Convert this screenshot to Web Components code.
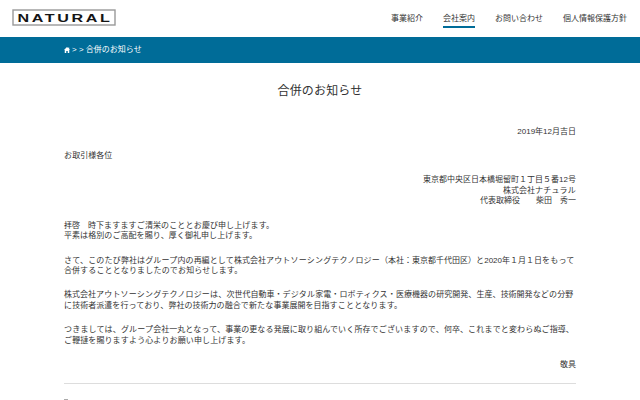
<!DOCTYPE html>
<html lang="ja">
<head>
<meta charset="utf-8">
<title>合併のお知らせ</title>
<style>
body{margin:0;height:400px;overflow:hidden;background:#fff;color:#333;font:8px/10.5px "Liberation Sans","Noto Sans CJK JP",sans-serif}
</style>
</head>
<body>
<notice-page></notice-page>
<script>
const define = (name, html) => customElements.define(name, class extends HTMLElement {
  constructor() {
    super();
    this.attachShadow({mode: 'open'}).innerHTML = html;
  }
});

define('brand-logo', `
<style>:host{display:block;width:104px;height:17px}svg{display:block}</style>
<svg width="104" height="17" viewBox="0 0 104 17">
  <rect x="1" y="1" width="102" height="15" fill="#fff" stroke="#999" stroke-width="1.4"/>
  <text transform="translate(5.4 12.5) scale(1.55 1)" textLength="59.6" lengthAdjust="spacing" font-family="Liberation Sans" font-weight="700" font-size="10.4" fill="#151515">NATURAL</text>
</svg>`);

define('nav-item', `
<style>
:host{display:block;box-sizing:border-box;height:15px;line-height:12px;white-space:nowrap;border-bottom:2px solid transparent}
:host([active]){border-color:#006c98}
</style><slot></slot>`);

define('site-header', `
<style>
:host{display:flex;justify-content:space-between;box-sizing:border-box;height:37px;padding:9px 13px 0 12px}
nav{display:flex;gap:20px;padding-top:4px}
</style>
<brand-logo></brand-logo>
<nav><slot></slot></nav>`);

define('bread-crumb', `
<style>
:host{display:flex;align-items:center;box-sizing:border-box;height:25.5px;padding:0 64px;background:#006c98;color:#fff;white-space:pre}
svg{display:block;margin-right:2px}
</style>
<svg width="6" height="6" viewBox="0 0 12 12"><path fill="#fff" d="M6 0 0 5.8h1.5V12h3V8h3v4h3V5.8H12L10.4 4.2V1H8.6v1.5z"/></svg><span><slot></slot></span>`);

define('page-title', `
<style>:host{display:block;height:18px;margin-top:19px;font-size:12px;line-height:18px;letter-spacing:.17px;text-align:center}</style>
<slot></slot>`);

// Kana and Japanese punctuation are set slightly looser than kanji.
customElements.define('letter-paragraph', class extends HTMLElement {
  constructor() {
    super();
    this.attachShadow({mode: 'open'}).innerHTML = `
<style>
:host{display:block;white-space:nowrap}
:host([end]){text-align:right}
::slotted(span){letter-spacing:.19px}
</style><slot></slot>`;
  }
  connectedCallback() {
    this.innerHTML = this.innerHTML.replace(/[\u3001\u3002\u3041-\u30ff]+/g, '<span>$&</span>');
  }
});

define('letter-body', `
<style>
:host{display:flex;flex-direction:column;gap:13.9px;margin:27px 64px 0;padding-bottom:12.5px;border-bottom:1px solid #ddd}
</style><slot></slot>`);

define('list-marker', `
<style>:host{display:block;width:4px;height:2px;margin:15px 64px 0;background:#aaa}</style>`);

define('notice-page', `
<style>:host{display:block}</style>
<site-header>
  <nav-item>事業紹介</nav-item><nav-item active>会社案内</nav-item><nav-item>お問い合わせ</nav-item><nav-item>個人情報保護方針</nav-item>
</site-header>
<bread-crumb>&gt; &gt; 合併のお知らせ</bread-crumb>
<page-title>合併のお知らせ</page-title>
<letter-body>
<letter-paragraph end>2019年12月吉日</letter-paragraph>
<letter-paragraph>お取引様各位</letter-paragraph>
<letter-paragraph end>東京都中央区日本橋堀留町１丁目５番12号<br>株式会社ナチュラル<br>代表取締役　　柴田　秀一</letter-paragraph>
<letter-paragraph>拝啓　時下ますますご清栄のこととお慶び申し上げます。<br>平素は格別のご高配を賜り、厚く御礼申し上げます。</letter-paragraph>
<letter-paragraph>さて、このたび弊社はグループ内の再編として株式会社アウトソーシングテクノロジー（本社：東京都千代田区）と2020年１月１日をもって<br>合併することとなりましたのでお知らせします。</letter-paragraph>
<letter-paragraph>株式会社アウトソーシングテクノロジーは、次世代自動車・デジタル家電・ロボティクス・医療機器の研究開発、生産、技術開発などの分野<br>に技術者派遣を行っており、弊社の技術力の融合で新たな事業展開を目指すこととなります。</letter-paragraph>
<letter-paragraph>つきましては、グループ会社一丸となって、事業の更なる発展に取り組んでいく所存でございますので、何卒、これまでと変わらぬご指導、<br>ご鞭撻を賜りますよう心よりお願い申し上げます。</letter-paragraph>
<letter-paragraph end>敬具</letter-paragraph>
</letter-body>
<list-marker></list-marker>`);
</script>
</body>
</html>
